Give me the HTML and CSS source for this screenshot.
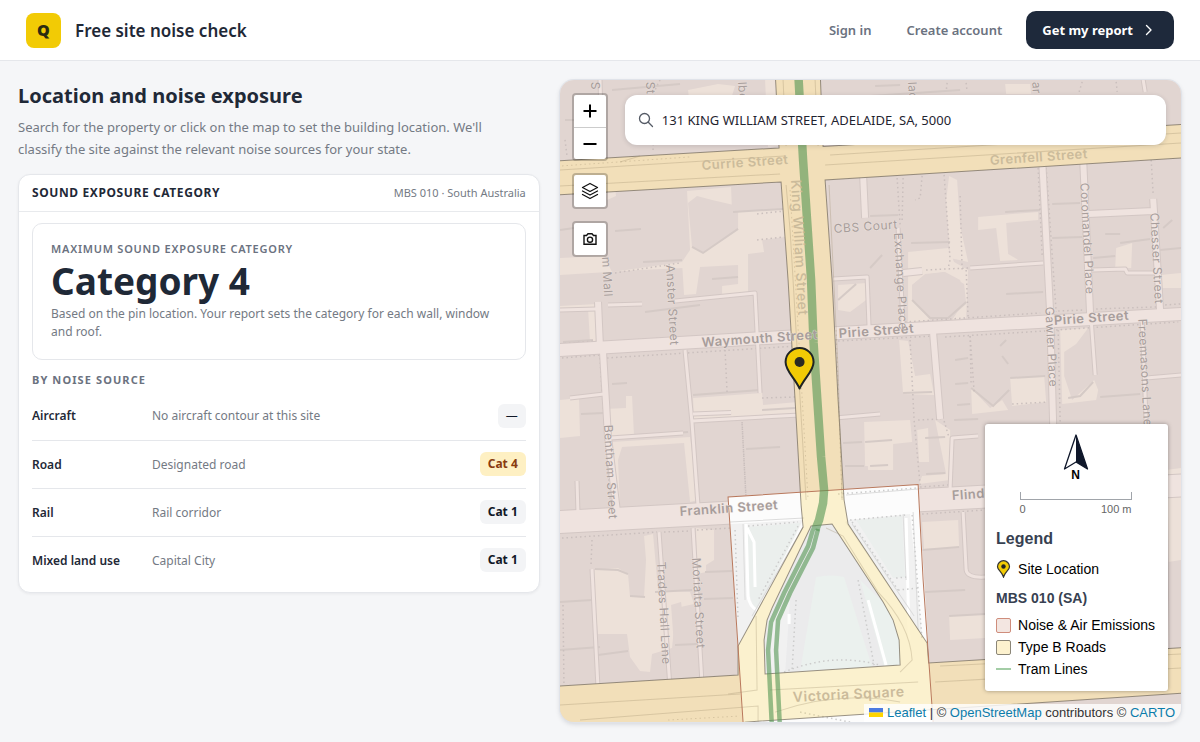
FILE: index.html
```html
<!DOCTYPE html>
<html lang="en">
<head>
<meta charset="utf-8">
<meta name="viewport" content="width=device-width, initial-scale=1">
<title>Free site noise check</title>
<link rel="stylesheet" href="styles.css">
</head>
<body>
<header class="topbar">
  <div class="brand"><span class="logo">Q</span><span class="brand-name">Free site noise check</span></div>
  <nav class="nav">
    <a class="nav-link" href="#">Sign in</a>
    <a class="nav-link" href="#">Create account</a>
    <button class="cta" type="button">Get my report
      <svg width="10" height="12" viewBox="0 0 10 12" fill="none" stroke="currentColor" stroke-width="1.4" stroke-linecap="round" stroke-linejoin="round" aria-hidden="true"><path d="M2.5 1.5 7 6l-4.500 4.500"/></svg>
    </button>
  </nav>
</header>
<main class="layout">
  <section class="panel">
    <h1 class="title">Location and noise exposure</h1>
    <p class="lead">Search for the property or click on the map to set the building location. We'll classify the site against the relevant noise sources for your state.</p>
    <div class="card">
      <div class="card-head"><h2 class="card-title">SOUND EXPOSURE CATEGORY</h2><span class="card-meta">MBS 010 · South Australia</span></div>
      <div class="card-body">
        <div class="summary">
          <p class="summary-label">MAXIMUM SOUND EXPOSURE CATEGORY</p>
          <p class="summary-value">Category 4</p>
          <p class="summary-note">Based on the pin location. Your report sets the category for each wall, window and roof.</p>
        </div>
        <h3 class="sub">BY NOISE SOURCE</h3>
        <table class="sources">
          <tbody>
            <tr><th scope="row">Aircraft</th><td>No aircraft contour at this site</td><td class="cat"><span class="badge badge-none">—</span></td></tr>
            <tr><th scope="row">Road</th><td>Designated road</td><td class="cat"><span class="badge badge-high">Cat 4</span></td></tr>
            <tr><th scope="row">Rail</th><td>Rail corridor</td><td class="cat"><span class="badge">Cat 1</span></td></tr>
            <tr><th scope="row">Mixed land use</th><td>Capital City</td><td class="cat"><span class="badge">Cat 1</span></td></tr>
          </tbody>
        </table>
      </div>
    </div>
  </section>
  <section class="map" aria-label="Site map">
    <svg class="map-art" viewBox="560 80 621 642" preserveAspectRatio="xMidYMid slice" aria-hidden="true">
      <defs>
        <g id="streets">
          <path class="w12" d="M550 350.500 800 336M830 333.500 1190 313.500"/>
          <path class="w23" d="M550 522.500 732 512.500M915 500.500 1190 485"/>
          <path class="w6" d="M1042 160 1050 313 1055 500M1083 160 1090 316M598 302 600 348M603 352 608 437 617 512M863 175 865 218M1088 214 1153 211M903 273 922 271M933 333 940 419M1153 199 1160 312"/>
          <path class="w4" d="M1091 320 1095 375M970 268 1043 263M898 228 903 325M685 350 692 423 698 506M675 301 755 293 760 393M692 421 800 415M693 414 731 412.500M610 438 683 433M570 398 604 394M835 418 880 414M659 532 670 688M693 528 702 684M592 569 598 688M577 481 578 514M963 512 966 570Q967 578 985 577M978 436 952 438 950 488M833 279 867 277 869 328M1142 320 1146 424M608 305 642 304M1092 270 1125 269 1127 273 1160 273M600 80 602 158M1143 80 1145 92M1146 378 1181 375M1165 490 1167 650M560 310 596 309"/>
        </g>
        <path id="roads-b" d="M550 161.500 779 148 775 70 820 70 823 146.500 1190 124V157.500L825 180 832 280 838 400 844 500 848 524 927 643 928.500 663 1190 647V692.500L745 722 740 740H550V686.500L738 675V646L803 527 801 505 795 400 788 280 781 182 550 195.500zM811 526 772 608 767 620 764 640 765 674 900 665 899 640 893 620 883 602 832 524z"/>
      </defs>
      <rect x="540" y="60" width="660" height="680" fill="#e1d5d1"/>
      <g fill="#ede1d9">
        <path d="M687 191 731 187 732 212 783 209 785 237 762 240 764 252 748 254 748 296 722 298 722 286 738 284 738 265 700 267 696 294 684 295 682 262 690 250z"/>
        <path d="M560 258 604 256 612 272 682 262 684 268 640 270 560 275zM560 306 597 304 598 343 590 342 588 308 560 310zM718 84 735 86 730 102 690 108 688 90zM765 80 776 80 778 146 768 147zM612 160 616 196 607 200 604 160z"/>
        <path d="M605 409 626 408 626 396 632 396 634 436 608 438zM560 400 579 398 580 436 560 438zM612 442 690 437 698 500 690 502 684 443 622 447 618 460 620 508 616 508zM693 398 762 393 763 405 798 402 799 414 694 420z"/>
        <path d="M592 570 618 568 628 574 630 597 644 597 646 560 644 536 653 534 658 590 690 592 694 604 676 608 672 648 652 654 650 672 640 671 630 657 627 634 598 634zM696 528 714 530 714 560 706 565 706 572 697 574z"/>
        <path d="M949 176 957 180 960 226 968 262 950 258 946 200zM978 217 1038 212 1038 220 1006 223 1008 254 1018 260 1000 261 996 228 978 230zM908 252 948 248 954 262 968 270 966 318 952 320 965 300 960 280 945 272 925 274 912 285 912 300 930 320 908 323zM1116 248 1132 243 1131 268 1115 268z"/>
        <path d="M1060 330 1088 328 1076 344 1064 352 1064 376 1072 400 1094 380 1098 390 1096 400 1062 404zM1010 378 1044 376 1046 402 1012 406zM899 340 908 341 915 376 930 374 934 395 903 394zM971 388 990 408 1002 400 1008 410 972 414zM1160 275 1181 273 1181 288 1162 288zM864 422 910 420 912 442 893 444 892 466 865 466zM917 430 928 428 929 462 919 462zM935 420 950 430 950 480 919 484 922 476 946 474z"/>
        <path d="M922 522 958 520 959 548 924 549zM949 616 985 614 985 638 950 640zM1166 470 1181 468 1181 560 1168 562zM1005 84 1030 84 1031 94 1006 94zM866 440 893 440 893 470 868 470zM838 285 867 283 866 300 850 312 838 310z"/>
      </g>
      <g fill="#e1d5d1"><path d="M688 203 697 196 712 200 738 206 738 229 703 253 692 247zM912 285 925 275 944 272 964 284 966 304 948 320 932 318 912 300zM671 605 681 602 682 610 691 612 694 640 674 646z"/></g>
      <g fill="none" stroke="#d5cac6" stroke-width="2">
        <path d="M615 231 641 229M560 230 574 228M643 262 682 260M692 247 703 253 738 229M733 212 783 209M712 279 738 277M645 312 700 305M563 342 593 340M634 436 688 432M693 395 760 390M746 449 780 447M762 410 795 408M581 414 604 413M612 384 627 383M560 650 600 647M560 602 592 600M595 569 618 570 628 574M630 596 645 597M598 655 628 651M675 645 697 644M705 572 732 571M704 599 733 598M655 592 692 590"/>
        <path d="M911 243 950 242M870 216 898 215M1005 212 1040 210M1006 294 1043 292M1052 204 1080 203M1052 238 1082 237M1105 234 1120 234M1093 258 1115 256M1120 243 1150 239M912 300 930 318 948 318 966 302M971 388 993 406 1009 390M1010 378 1045 376M1068 398 1080 396 1093 382M1100 397 1140 394M903 393 932 392M1000 346 1006 340M1002 356 1008 364M955 360 968 358M955 384 968 383M957 405 970 404M843 443 862 442M865 442 892 440M845 466 864 466M925 438 945 437M926 474 945 473M954 420 978 419M959 547 922 550M925 592 965 590M949 616 985 614M870 466 888 465M838 300 856 284M870 268 882 255M1163 228 1172 220M1160 250 1181 248M1166 490 1181 488"/>
        <path d="M565 120 574 120M612 90 680 84M660 140 730 136M875 86 900 85M905 105 1000 100M870 96 960 90"/>
      </g>
      <g fill="none" stroke="#cabfbd" stroke-width="1.500" stroke-dasharray="1.500 3">
        <path d="M562 358 600 355M607 358 797 346M560 344 596 341M615 341 756 333M600 358 602 392 606 440 611 510M725 350 727 392M742 422 746 498M742 424 746 500"/>
        <path d="M838 341 935 336M945 337 1045 331M1056 330 1178 322M905 322 1040 313M1058 311 1085 310M1096 309 1156 307M1165 305 1180 304M897 178 900 225M903 178 902 220M944 175 950 260 948 268M1038 168 1042 255M1046 168 1056 312M1151 160 1153 195M926 270 968 268M966 270 968 318M960 196 962 270M922 176 920 198 915 200M910 340 914 420 920 485M970 336 971 385M1012 404 1048 402M1050 320 1052 420M1058 330 1060 422"/>
        <path d="M562 538 657 532M664 532 690 531M697 530 730 528M592 540 591 565M563 605 564 690M562 350 562 345M615 273 680 263M757 240 784 237M757 214 785 211M920 487 948 485M922 514 985 510M918 420 941 419M944 421 949 438M970 336 974 392M560 688 730 677M565 695 565 716M660 80 655 90M653 150 655 95M947 83 946 92M966 83 967 92M1082 82 1079 92M1116 82 1117 92M565 140 567 156M762 398 795 397"/>
      </g>
      <use href="#streets" class="casing"/>
      <use href="#streets" class="surface"/>
      <use href="#roads-b" fill="#efe3de" fill-rule="evenodd"/>

      <path fill="#fcfcfc" d="M728 497 918 484.500 933 722 743 722z"/>
      <path fill="#f1f1f1" d="M730 524 803 520 738 646zM848 520 910 514 922 636 845 522z"/>
      <g fill="#ebefed"><path d="M747 527 800 523 796 534 755 612 748 590zM856 520 902 516 905 577 893 578z"/></g>
      <path fill="#ebebec" d="M811 526 832 524 883 602 893 620 899 640 900 665 765 674 764 640 767 620z"/>
      <path fill="#ebf1ee" d="M816 577Q832 574 844 577L872 667 800 671z"/>
      <path fill="#ebf1ee" d="M860 580 883 602 893 620 899 640 900 665 884 666z"/>
      <path fill="#fafafa" d="M768 620 790 600 785 674 766 674z" opacity=".4"/>
      <path fill="none" stroke="#fff" stroke-width="3" d="M746 524 748 596Q749 606 758 611M747 528 754 542 755 587M906 518 909 640M868 600 886 665M789 614 789 624"/>
      <path fill="none" stroke="#dcdcdc" d="M743 524 745 600M913 512 918 630M903 514 906 580M846 495 918 489M803 527 752 616M730 522 804 518M852 524 914 616"/>
      <path fill="none" stroke="#ccc" stroke-width="1.500" stroke-dasharray="1.500 3" d="M748 526 798 522M735 530 738 620M798 526 758 600M850 520 905 515M912 515 922 640M852 522 898 590M896 578 906 577M898 590 918 588M838 494 916 488M796 600 792 670M858 580 874 665M784 672Q832 652 880 665M800 712 850 722"/>

      <use href="#roads-b" class="zone"/>
      <path fill="none" stroke="#b9785c" stroke-width="1" d="M743 722 728 497 918 484.500 923 580 933 722"/>
      <g fill="none" stroke="#9a8a6a" stroke-opacity=".3">
        <path d="M560 170 785 156M560 186 780 174M830 155 1181 133M825 165 1181 143M786 185 790 230 806 500M829 185 838 370 842 500M783 80 786 146M815 80 818 146M620 162 640 156M940 666 1181 654M935 682 1181 668M560 705 740 694M756 616 757 690 728 694M900 672 912 660Q910 625 878 592L843 536 826 528M770 690 918 682M775 712Q840 690 900 702M580 720 758 706V722"/>
        <path stroke-dasharray="1.500 3" d="M562 166 690 157M790 190 808 500M836 330 842 500M668 720 740 716"/>
      </g>
      <g class="tram">
        <path stroke-width="8.500" d="M798 70 803 160 811 280 813.500 343 821 457 824 490 823 503 819 520 815 530"/>
        <path stroke-width="4.500" d="M813 529 808 546 784 593 771 622 768 650 772 730"/>
        <path stroke-width="4.500" d="M818 529 813 548 790 593 778 620 776 650 780 730"/>
      </g>

      <g class="labels big">
        <text transform="translate(702 170) rotate(-4)" class="on-road">Currie Street</text>
        <text transform="translate(990 165) rotate(-4)" class="on-road">Grenfell Street</text>
        <text transform="translate(702 347) rotate(-4)">Waymouth Street</text>
        <text transform="translate(839 338) rotate(-4)">Pirie Street</text>
        <text transform="translate(1054 325) rotate(-4)">Pirie Street</text>
        <text transform="translate(680 516) rotate(-4)">Franklin Street</text>
        <text transform="translate(952 500) rotate(-4)">Flinders Street</text>
        <text transform="translate(793 702) rotate(-3)" class="on-road wide">Victoria Square</text>
        <text transform="translate(791 180) rotate(87)" class="on-road wide light">King William Street</text>
      </g>
      <g class="labels small">
        <text transform="translate(834 233) rotate(-4)">CBS Court</text>
        <text transform="translate(666 265) rotate(87)">Anster Street</text>
        <text transform="translate(602 257) rotate(87)">m Mall</text>
        <text transform="translate(604 425) rotate(87)">Bentham Street</text>
        <text transform="translate(657 562) rotate(87)">Trades Hall Lane</text>
        <text transform="translate(692 558) rotate(87)">Morialta Street</text>
        <text transform="translate(894 233) rotate(87)">Exchange Place</text>
        <text transform="translate(1080 183) rotate(87)">Coromandel Place</text>
        <text transform="translate(1150 213) rotate(87)">Chesser Street</text>
        <text transform="translate(1045 307) rotate(87)">Gawler Place</text>
        <text transform="translate(1138 319) rotate(87)">Freemasons Lane</text>
        <text transform="translate(646 82) rotate(87)">St</text>
        <text transform="translate(738 82) rotate(87)">lbe</text>
        <text transform="translate(908 82) rotate(87)">lac</text>
        <text transform="translate(1032 82) rotate(87)">ar</text>
        <text transform="translate(591 82) rotate(87)">S</text>
      </g>
      <path d="M799.500 388.500C794 377 785.500 371 785.500 362a14 14 0 0 1 28 0C813.500 371 805 377 799.500 388.500z" fill="#f2cb05" stroke="#1f2423" stroke-width="2" stroke-linejoin="round"/>
      <circle cx="799.500" cy="362" r="5" fill="#2b2b22"/>
    </svg>

    <div class="map-tools">
      <div class="tool-column">
        <div class="tool-group">
          <button class="tool" type="button" aria-label="Zoom in"><svg width="14" height="14" viewBox="0 0 14 14" stroke="#000" stroke-width="2" aria-hidden="true"><path d="M7 .5v13M.5 7h13"/></svg></button>
          <button class="tool" type="button" aria-label="Zoom out"><svg width="14" height="14" viewBox="0 0 14 14" stroke="#000" stroke-width="2" aria-hidden="true"><path d="M.5 7h13"/></svg></button>
        </div>
        <div class="tool-group"><button class="tool" type="button" aria-label="Layers"><svg width="18" height="18" viewBox="0 0 18 18" fill="none" stroke="#111" stroke-width="1.300" stroke-linejoin="round" stroke-linecap="round" aria-hidden="true"><path d="M9 1.500 16.500 5.500 9 9.500 1.500 5.500zM1.500 9 9 13l7.500-4M1.500 12.500 9 16.500l7.500-4"/></svg></button></div>
        <div class="tool-group"><button class="tool" type="button" aria-label="Take snapshot"><svg width="14" height="14" viewBox="0 0 14 14" fill="none" stroke="#111" stroke-width="1.400" aria-hidden="true"><path d="M1 3.500h2.500L5 1.700h4l1.500 1.800H13v8.800H1z"/><circle cx="7" cy="7.700" r="2.600"/></svg></button></div>
      </div>
      <label class="search">
        <svg width="16" height="16" viewBox="0 0 16 16" fill="none" stroke="#555b66" stroke-width="1.300" stroke-linecap="round" aria-hidden="true"><circle cx="6.500" cy="6.500" r="5"/><path d="M10.300 10.300 14.500 14.500"/></svg>
        <input class="search-input" type="text" aria-label="Search address" value="131 KING WILLIAM STREET, ADELAIDE, SA, 5000">
      </label>
    </div>

    <aside class="legend">
      <div class="compass">
        <svg width="26" height="36" viewBox="0 0 26 36" aria-hidden="true"><path d="M13 1 24.500 35 13 28 1.500 35z" fill="#fff" stroke="#0f172a" stroke-width="1.300" stroke-linejoin="round"/><path d="M13 1 24.500 35 13 28z" fill="#0f172a"/></svg>
        <span class="north">N</span>
      </div>
      <div class="scale"><div class="scale-bar"></div><div class="scale-text"><span>0</span><span>100 m</span></div></div>
      <h2 class="legend-title">Legend</h2>
      <div class="legend-row"><svg width="15" height="18" viewBox="0 0 15 18" aria-hidden="true"><path d="M7.500 17C6 12 1.500 10 1.500 6.700a6 6 0 0 1 12 0C13.500 10 9 12 7.500 17z" fill="#f2cb05" stroke="#333" stroke-width="1.200"/><circle cx="7.500" cy="6.500" r="2.200" fill="#222"/></svg>Site Location</div>
      <h3 class="legend-sub">MBS 010 (SA)</h3>
      <div class="legend-row"><span class="swatch swatch-noise"></span>Noise &amp; Air Emissions</div>
      <div class="legend-row"><span class="swatch swatch-road"></span>Type B Roads</div>
      <div class="legend-row"><span class="swatch-line"></span>Tram Lines</div>
    </aside>

    <div class="attribution"><svg width="14" height="9" viewBox="0 0 14 9" aria-hidden="true"><path fill="#4c7be1" d="M0 0h14v4.500H0z"/><path fill="#ffd500" d="M0 4.500h14V9H0z"/></svg> <a href="#">Leaflet</a> | © <a href="#">OpenStreetMap</a> contributors © <a href="#">CARTO</a></div>
  </section>
</main>
</body>
</html>
```
FILE: styles.css
```css
* { box-sizing: border-box; }
body {
  margin: 0;
  min-height: 100vh;
  display: flex;
  flex-direction: column;
  background: #f5f6f8;
  color: #1f2937;
  font-family: "Noto Sans", "Open Sans", sans-serif;
  font-size: 13px;
}
h1, h2, h3, p { margin: 0; }
button, input { font: inherit; }

.topbar {
  display: flex;
  align-items: center;
  justify-content: space-between;
  min-height: 61px;
  padding: 0 26px;
  background: #fff;
  border-bottom: 1px solid #e5e7eb;
}
.brand { display: flex; align-items: center; gap: 14px; }
.logo {
  display: grid;
  place-items: center;
  width: 35px;
  height: 35px;
  border-radius: 8px;
  background: #f2cb05;
  color: #2b2b10;
  font-size: 16px;
  font-weight: 900;
}
.brand-name { font-size: 17px; font-weight: 600; }
.nav { display: flex; align-items: center; }
.nav-link {
  margin-right: 35px;
  color: #6b7280;
  font-size: 13px;
  font-weight: 600;
  text-decoration: none;
}
.nav-link:nth-child(2) { margin-right: 24px; }
.cta {
  display: flex;
  align-items: center;
  gap: 11px;
  height: 38px;
  padding: 0 20px 0 16px;
  border: 0;
  border-radius: 10px;
  background: #1e293b;
  color: #fff;
  font-size: 13px;
  font-weight: 700;
}

.layout {
  flex: 1;
  display: grid;
  grid-template-columns: 21fr 25fr;
  gap: 20px;
  padding: 19px 19px 20px 18px;
}
.title { font-size: 20px; font-weight: 700; line-height: 32px; }
.lead { margin-top: 4px; padding-right: 24px; color: #747a84; font-size: 13px; line-height: 22px; }

.card {
  margin-top: 14px;
  border: 1px solid #e5e7eb;
  border-radius: 12px;
  background: #fff;
  box-shadow: 0 1px 3px rgba(15, 23, 42, 0.06);
}
.card-head {
  display: flex;
  align-items: center;
  justify-content: space-between;
  height: 37px;
  padding: 0 13px 2px;
  border-bottom: 1px solid #e8eaed;
}
.card-title { font-size: 12px; font-weight: 700; letter-spacing: 0.05em; }
.card-meta { color: #747a84; font-size: 11px; }
.card-body { padding: 11px 13px 8px; }
.summary {
  padding: 15px 18px 18px;
  border: 1px solid #e5e7eb;
  border-radius: 10px;
}
.summary-label {
  color: #6b7280;
  font-size: 11px;
  font-weight: 600;
  line-height: 20px;
  letter-spacing: 0.07em;
}
.summary-value { font-size: 37px; font-weight: 700; line-height: 44px; }
.summary-note { margin-top: 2px; color: #747a84; font-size: 12px; line-height: 18px; }
.sub {
  margin-top: 11px;
  color: #6b7280;
  font-size: 11px;
  font-weight: 700;
  line-height: 18px;
  letter-spacing: 0.1em;
}
.sources { width: 100%; margin-top: 3px; border-collapse: collapse; font-size: 12px; }
.sources th, .sources td { height: 48px; padding: 0; text-align: left; }
.sources th { width: 120px; font-weight: 600; }
.sources td { color: #747a84; }
.sources tr + tr { border-top: 1px solid #e5e7eb; }
.sources .cat { text-align: right; }
.badge {
  display: inline-block;
  padding: 0 8px;
  border-radius: 6px;
  background: #f3f4f6;
  color: #111827;
  font-size: 12px;
  font-weight: 700;
  line-height: 24px;
}
.badge-none { font-weight: 400; }
.badge-high { background: #fef0c3; color: #8a3c10; }

.map {
  position: relative;
  overflow: hidden;
  min-height: 560px;
  border-radius: 14px;
  box-shadow: 0 0 0 1px #e0e3e9, 0 2px 5px rgba(15, 23, 42, 0.15);
}
.map-art { position: absolute; inset: 0; width: 100%; height: 100%; }
#streets path { fill: none; stroke-linejoin: round; }
.w4 { stroke-width: var(--w4); }
.w6 { stroke-width: var(--w6); }
.w12 { stroke-width: var(--w12); }
.w23 { stroke-width: var(--w23); }
.casing { stroke: #d3c7c4; --w4: 5px; --w6: 8px; --w12: 14px; --w23: 24px; }
.surface { stroke: #efe3df; --w4: 3px; --w6: 6px; --w12: 12px; --w23: 22px; }
.zone { fill: #fad762; fill-opacity: 0.3; fill-rule: evenodd; stroke: #6f665a; stroke-width: 1px; stroke-opacity: 0.7; }
.tram { fill: none; stroke: #549654; stroke-opacity: 0.6; }
.labels { fill: #a79d9b; font-family: Inter, "Noto Sans", sans-serif; stroke: #efe5e1; stroke-width: 1px; stroke-opacity: 0.6; paint-order: stroke; letter-spacing: 0.5px; }
.big { font-size: 13px; font-weight: 600; }
.wide { font-size: 14px; }
.small { font-size: 12px; }
.on-road { fill: #cbbb9b; stroke: none; }
.light { font-weight: 500; }

.map-tools {
  position: relative;
  display: flex;
  align-items: flex-start;
  gap: 17px;
  padding: 13px 15px 0 12px;
}
.tool-column { display: flex; flex-direction: column; gap: 12px; }
.tool-group {
  border: 2px solid rgba(0, 0, 0, 0.22);
  border-radius: 4px;
  background: #fff;
  background-clip: padding-box;
}
.tool {
  display: grid;
  place-items: center;
  width: 32px;
  height: 32px;
  padding: 0;
  border: 0;
  background: none;
}
.tool + .tool { border-top: 1px solid #ccc; }
.search {
  flex: 1;
  display: flex;
  align-items: center;
  gap: 8px;
  height: 50px;
  margin-top: 2px;
  padding: 0 13px;
  border-radius: 12px;
  background: #fff;
  box-shadow: 0 1px 5px rgba(15, 23, 42, 0.15);
}
.search-input {
  flex: 1;
  min-width: 0;
  padding: 0;
  border: 0;
  outline: 0;
  background: none;
  color: #1f2430;
  font-size: 13px;
}

.legend {
  position: absolute;
  right: 13px;
  bottom: 31px;
  padding: 10px 13px 11px 11px;
  border-radius: 3px;
  background: #fff;
  box-shadow: 0 0 4px rgba(0, 0, 0, 0.35);
  color: #000;
  font-family: "Liberation Sans", Arial, sans-serif;
  font-size: 14px;
}
.compass { display: flex; flex-direction: column; align-items: center; }
.north { font-size: 12px; font-weight: 700; line-height: 10px; }
.scale { width: 112px; margin: 12px auto 0; color: #666; font-size: 11px; }
.scale-bar { height: 8px; border: 1px solid #a0a4aa; border-top: 0; }
.scale-text { display: flex; justify-content: space-between; line-height: 18px; }
.legend-title { margin-top: 10px; color: #374151; font-size: 16px; line-height: 22px; }
.legend-row { display: flex; align-items: center; gap: 7px; line-height: 22px; }
.legend-title + .legend-row { margin-top: 8px; }
.legend-sub { margin: 7px 0 5px; color: #374151; font-size: 14px; line-height: 22px; }
.swatch { width: 15px; height: 15px; border-radius: 2px; }
.swatch-noise { border: 1px solid #cf8d7c; background: #f3e6e1; }
.swatch-road { border: 1px solid #8b8678; background: #fdf2cf; }
.swatch-line { width: 15px; height: 2px; background: #a3cda6; }

.attribution {
  position: absolute;
  right: 0;
  bottom: 0;
  padding: 0 6px 0 5px;
  background: rgba(255, 255, 255, 0.8);
  color: #333;
  font-family: "Liberation Sans", Arial, sans-serif;
  font-size: 13px;
  line-height: 18px;
}
.attribution a { color: #0b7cab; text-decoration: none; }
```
